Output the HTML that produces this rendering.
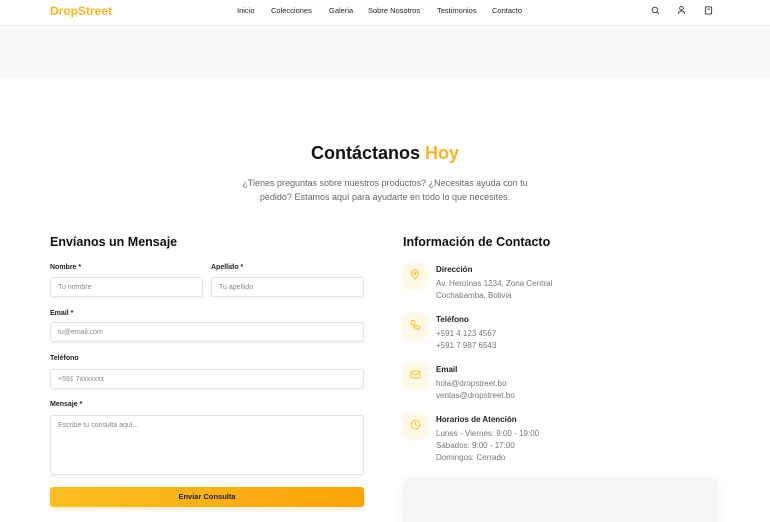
<!DOCTYPE html><html><head><meta charset="utf-8"><style>
*{box-sizing:border-box;margin:0;padding:0}
html,body{width:770px;height:522px;overflow:hidden}
body{background:#fff;font-family:"Liberation Sans",sans-serif;color:#111;position:relative}
.a{position:absolute;white-space:nowrap}
.hdr{left:0;top:0;width:770px;height:26px;background:#fff;border-bottom:1px solid #ececec;box-shadow:0 1px 3px rgba(0,0,0,.05)}
.band{left:0;top:26px;width:770px;height:52px;background:#f8f8f8}
.nav{font-size:7.5px;color:#222;top:6px}
.lbl{font-size:7px;font-weight:bold;color:#222}
.in{border:1px solid #e3e3e3;border-radius:3px;background:#fff;box-shadow:0 1px 3px rgba(0,0,0,.06);font-size:7px;color:#888;padding:6px 7px}
.ib{width:24px;height:24px;border-radius:6px;background:#fff8e6;box-shadow:0 2px 6px rgba(251,191,36,.15)}
.t{font-size:8px;font-weight:bold;color:#222}
.s{font-size:8px;color:#777;line-height:12px}
</style></head><body>
<div class="a hdr"></div>
<div class="a" style="left:50px;top:4px;font-size:12px;font-weight:bold;color:#fbb324">DropStreet</div>
<div class="a nav" style="left:237px">Inicio</div>
<div class="a nav" style="left:271px">Colecciones</div>
<div class="a nav" style="left:329px">Galeria</div>
<div class="a nav" style="left:368px">Sobre Nosotros</div>
<div class="a nav" style="left:437px">Testimonios</div>
<div class="a nav" style="left:492px">Contacto</div>
<svg class="a" style="left:651px;top:6px" width="9" height="9" viewBox="0 0 10 10" fill="none" stroke="#333" stroke-width="1"><circle cx="4.3" cy="4.3" r="3"/><path d="M6.5 6.5 9 9"/></svg>
<svg class="a" style="left:677px;top:5px" width="9" height="10" viewBox="0 0 10 10" fill="none" stroke="#333" stroke-width="1"><circle cx="5" cy="3" r="2"/><path d="M1.5 9.5c0-2 1.5-3.5 3.5-3.5s3.5 1.5 3.5 3.5"/></svg>
<svg class="a" style="left:704px;top:5px" width="9" height="10" viewBox="0 0 10 10" fill="none" stroke="#333" stroke-width="1"><rect x="1.5" y="1.5" width="7" height="8" rx="1.5"/><path d="M3.5 4h3"/></svg>
<div class="a band"></div>
<div class="a" style="left:0;width:770px;top:143px;text-align:center;font-size:18px;font-weight:bold;color:#111">Contáctanos <span style="color:#fbb324">Hoy</span></div>
<div class="a" style="left:0;width:770px;top:176px;text-align:center;font-size:9px;color:#666;line-height:14px">¿Tienes preguntas sobre nuestros productos? ¿Necesitas ayuda con tu<br>pedido? Estamos aquí para ayudarte en todo lo que necesites.</div>
<div class="a" style="left:50px;top:235px;font-size:12.5px;font-weight:bold;color:#111">Envíanos un Mensaje</div>
<div class="a lbl" style="left:50px;top:264px">Nombre *</div>
<div class="a lbl" style="left:211px;top:264px">Apellido *</div>
<div class="a in" style="left:50px;top:277px;width:153px;height:20px">Tu nombre</div>
<div class="a in" style="left:211px;top:277px;width:153px;height:20px">Tu apellido</div>
<div class="a lbl" style="left:50px;top:310px">Email *</div>
<div class="a in" style="left:50px;top:322px;width:314px;height:20px">tu@email.com</div>
<div class="a lbl" style="left:50px;top:355px">Teléfono</div>
<div class="a in" style="left:50px;top:369px;width:314px;height:20px">+591 7xxxxxxx</div>
<div class="a lbl" style="left:50px;top:401px">Mensaje *</div>
<div class="a in" style="left:50px;top:415px;width:314px;height:60px">Escribe tu consulta aquí...</div>
<div class="a" style="left:50px;top:487px;width:314px;height:20px;border-radius:3px;background:linear-gradient(90deg,#fbbf24,#fba30a);box-shadow:0 2px 5px rgba(251,191,36,.3);text-align:center;font-size:7.5px;font-weight:bold;line-height:20px;color:#222">Enviar Consulta</div>
<div class="a" style="left:403px;top:235px;font-size:12.5px;font-weight:bold;color:#111">Información de Contacto</div>

<div class="a ib" style="left:403px;top:263px"></div>
<svg class="a" style="left:410px;top:269px" width="10" height="11" viewBox="0 0 10 11" fill="none" stroke="#fbbf24" stroke-width="1"><path d="M5 10S1.5 6.8 1.5 4.3a3.5 3.5 0 0 1 7 0C8.5 6.8 5 10 5 10z"/><circle cx="5" cy="4.3" r="1.2"/></svg>
<div class="a t" style="left:436px;top:265px">Dirección</div>
<div class="a s" style="left:436px;top:278px">Av. Heroínas 1234, Zona Central<br>Cochabamba, Bolivia</div>

<div class="a ib" style="left:403px;top:313px"></div>
<svg class="a" style="left:410px;top:319px" width="11" height="11" viewBox="0 0 11 11" fill="none" stroke="#fbbf24" stroke-width="1"><path d="M2 1.5h2l1 2.5-1.3 1a6 6 0 0 0 2.5 2.5l1-1.3 2.5 1v2a1 1 0 0 1-1 1A8.5 8.5 0 0 1 1 2.5a1 1 0 0 1 1-1z"/></svg>
<div class="a t" style="left:436px;top:315px">Teléfono</div>
<div class="a s" style="left:436px;top:328px">+591 4 123 4567<br>+591 7 987 6543</div>

<div class="a ib" style="left:403px;top:363px"></div>
<svg class="a" style="left:410px;top:370px" width="11" height="9" viewBox="0 0 11 9" fill="none" stroke="#fbbf24" stroke-width="1"><rect x="1" y="1" width="9" height="7" rx="1"/><path d="M1 2l4.5 3L10 2"/></svg>
<div class="a t" style="left:436px;top:365px">Email</div>
<div class="a s" style="left:436px;top:378px">hola@dropstreet.bo<br>ventas@dropstreet.bo</div>

<div class="a ib" style="left:403px;top:413px"></div>
<svg class="a" style="left:410px;top:419px" width="11" height="11" viewBox="0 0 11 11" fill="none" stroke="#fbbf24" stroke-width="1"><circle cx="5.5" cy="5.5" r="4.3"/><path d="M5.5 3v2.7l1.7 1"/></svg>
<div class="a t" style="left:436px;top:415px">Horarios de Atención</div>
<div class="a s" style="left:436px;top:428px">Lunes - Viernes: 9:00 - 19:00<br>Sábados: 9:00 - 17:00<br>Domingos: Cerrado</div>

<div class="a" style="left:403px;top:478px;width:315px;height:44px;background:#f5f5f5;border-radius:8px 8px 0 0;box-shadow:0 3px 12px rgba(0,0,0,.06)"></div>
</body></html>
